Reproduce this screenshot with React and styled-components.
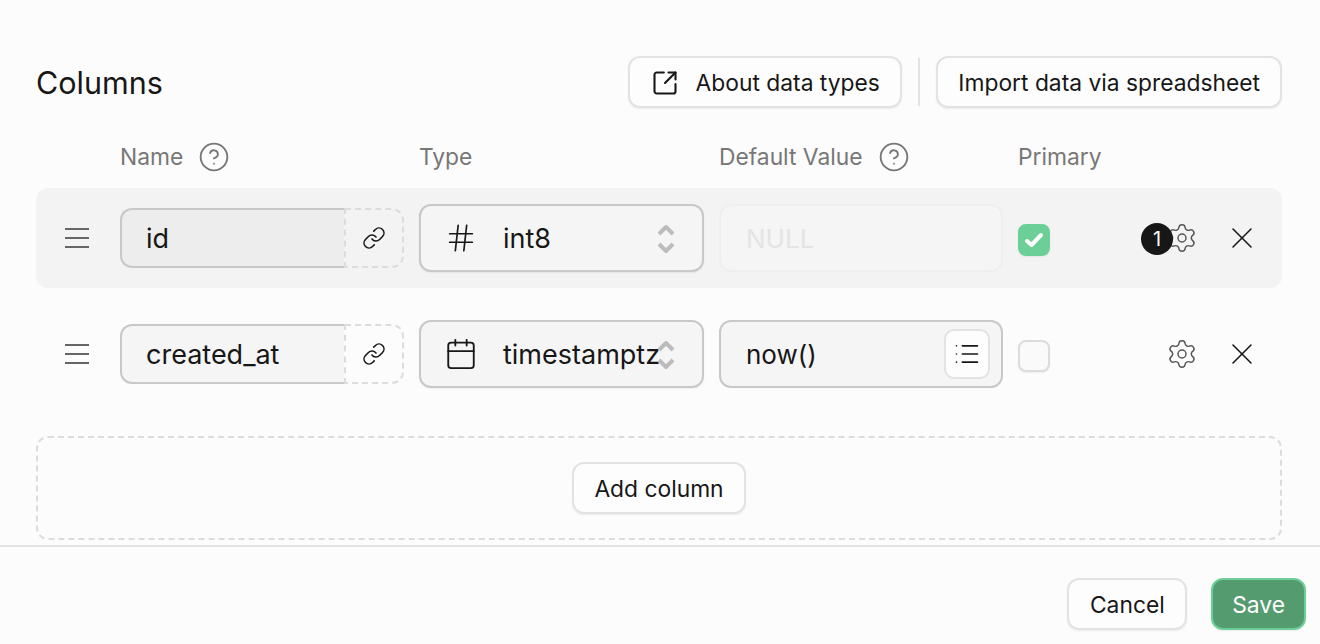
import styled, {createGlobalStyle} from 'styled-components'
import {Calendar, CircleHelp, Hash, Link as LinkIcon, List, Settings, SquareArrowOutUpRight, X} from 'lucide-react'

const GlobalStyle = createGlobalStyle`
	html, body {
		margin: 0;
		padding: 0;
		background: #fcfcfc;
	}
	* {
		box-sizing: border-box;
	}
`

const Page = styled.div`
	width: 1320px;
	height: 644px;
	overflow: hidden;
	background: #fcfcfc;
	color: #171717;
	font-family: Inter, "Noto Sans", sans-serif;
	font-size: 22.8px;
`
const Content = styled.div`
	height: 543px;
	padding: 56px 38px 0 36px;
	display: flex;
	flex-direction: column;
`
const TopBar = styled.div`
	height: 52px;
	display: flex;
	align-items: center;
	justify-content: space-between;
`
const Title = styled.h2`
	margin: 0;
	padding-top: 2px;
	font-size: 30.5px;
	font-weight: 400;
	line-height: 50px;
`
const TopActions = styled.div`
	display: flex;
	align-items: center;
`
const Button = styled.button`
	height: 52px;
	padding: 1px ${(props)=>props.$pad || 20}px 0;
	display: flex;
	align-items: center;
	gap: 17px;
	border: 2px solid ${(props)=>props.$primary ? "#6ccf97" : "#e3e3e3"};
	border-radius: 12px;
	background: ${(props)=>props.$primary ? "#559b70" : "#fdfdfd"};
	color: ${(props)=>props.$primary ? "#fdfdfd" : "#171717"};
	box-shadow: 0 1px 2px rgba(0,0,0,0.07);
	font-family: inherit;
	font-size: 22.8px;
	white-space: nowrap;
`
const Divider = styled.div`
	width: 2px;
	height: 48px;
	margin: 0 16px;
	background: #e3e3e3;
`
const Grid = styled.div`
	display: grid;
	grid-template-columns: 69px 284px 285px 284px 1fr;
	column-gap: 15px;
	align-items: center;
`
const HeadRow = styled(Grid)`
	height: 80px;
	padding-top: 17px;
	color: #777;
`
const HeadCell = styled.div`
	grid-column: ${(props)=>props.$col};
	display: flex;
	align-items: center;
	gap: 15px;
	height: 32px;
`
const Row = styled(Grid)`
	height: 100px;
	margin-bottom: 16px;
	border-radius: 12px;
	background: ${(props)=>props.$active ? "#f3f3f3" : "transparent"};
`
const Handle = styled.svg`
	width: 24px;
	height: 20px;
	margin-left: 29px;
	color: #666;
`
const NameField = styled.div`
	display: flex;
	height: 60px;
	font-size: 27px;
`
const NameInput = styled.div`
	width: 224px;
	padding-left: 24px;
	display: flex;
	align-items: center;
	border: 2px solid #c8c8c8;
	border-right: none;
	border-radius: 12px 0 0 12px;
	background: ${(props)=>props.$active ? "#ededed" : "#f5f5f5"};
`
const LinkBox = styled.div`
	width: 60px;
	display: flex;
	align-items: center;
	justify-content: center;
	border: 2px dashed #dcdcdc;
	border-radius: 0 12px 12px 0;
`
const Select = styled.div`
	position: relative;
	height: 68px;
	padding-left: 22px;
	display: flex;
	align-items: center;
	gap: 24px;
	border: 2px solid #c8c8c8;
	border-radius: 12px;
	background: #f5f5f5;
	box-shadow: 0 1px 2px rgba(0,0,0,0.06);
	font-size: 27px;
`
const TypeIcon = styled.div`
	width: 36px;
	display: flex;
	justify-content: center;
`
const Chevrons = styled.svg`
	position: absolute;
	right: 27px;
	top: 17px;
	width: 18px;
	height: 32px;
	color: #bcbcbc;
`
const DefaultInput = styled.div`
	position: relative;
	height: 68px;
	padding-left: 25px;
	display: flex;
	align-items: center;
	border: 2px solid ${(props)=>props.$disabled ? "#efefef" : "#c8c8c8"};
	border-radius: 12px;
	background: #f5f5f5;
	color: ${(props)=>props.$disabled ? "#e4e4e4" : "#171717"};
	font-size: 26px;
`
const ListButton = styled.div`
	position: absolute;
	right: 11px;
	top: 7px;
	width: 46px;
	height: 50px;
	display: flex;
	align-items: center;
	justify-content: center;
	border: 2px solid #e3e3e3;
	border-radius: 10px;
	background: #fdfdfd;
`
const RowEnd = styled.div`
	display: flex;
	align-items: center;
`
const Check = styled.div`
	width: 32px;
	height: 32px;
	margin-top: 4px;
	display: flex;
	align-items: center;
	justify-content: center;
	border: 2px solid ${(props)=>props.$on ? "#6ccf97" : "#dcdcdc"};
	border-radius: 8px;
	background: ${(props)=>props.$on ? "#6ccf97" : "#fafafa"};
	box-shadow: 0 1px 2px rgba(0,0,0,0.06);
`
const GearWrap = styled.div`
	position: relative;
	width: 32px;
	height: 32px;
	margin-left: 116px;
	display: flex;
	color: #555;
`
const Badge = styled.div`
	position: absolute;
	left: -25px;
	top: 1px;
	width: 32px;
	height: 32px;
	display: flex;
	align-items: center;
	justify-content: center;
	border-radius: 50%;
	background: #171717;
	color: #fff;
	font-size: 20px;
`
const CloseWrap = styled.div`
	margin-left: 26px;
	display: flex;
	color: #171717;
`
const AddArea = styled.div`
	height: 104px;
	margin-top: 16px;
	display: flex;
	align-items: center;
	justify-content: center;
	border: 2px dashed #dcdcdc;
	border-radius: 12px;
`
const Footer = styled.div`
	height: 101px;
	margin-top: 2px;
	padding: 31px 14px 0 0;
	display: flex;
	justify-content: flex-end;
	gap: 24px;
	border-top: 2px solid #e3e3e3;
`

const columns = [
	{name: "id", type: "int8", active: true},
	{name: "created_at", type: "timestamptz"},
]

const App = () => {
	return (
		<Page>
			<GlobalStyle />
			<Content>
				<TopBar>
					<Title>Columns</Title>
					<TopActions>
						<Button $pad={20.5}>
							<SquareArrowOutUpRight size={28} strokeWidth={1.8} />
							About data types
						</Button>
						<Divider />
						<Button>Import data via spreadsheet</Button>
					</TopActions>
				</TopBar>
				<HeadRow>
					<HeadCell $col={2}>Name <CircleHelp size={32} strokeWidth={1.4} /></HeadCell>
					<HeadCell $col={3}>Type</HeadCell>
					<HeadCell $col={4}>Default Value <CircleHelp size={32} strokeWidth={1.4} /></HeadCell>
					<HeadCell $col={5}>Primary</HeadCell>
				</HeadRow>
				{columns.map((col)=>(
					<Row key={col.name} $active={col.active}>
						<Handle viewBox="0 0 24 20" fill="none" stroke="currentColor" strokeWidth="2">
							<path d="M0 1h24M0 10h24M0 19h24" />
						</Handle>
						<NameField>
							<NameInput $active={col.active}>{col.name}</NameInput>
							<LinkBox><LinkIcon size={24} strokeWidth={1.6} /></LinkBox>
						</NameField>
						<Select>
							<TypeIcon>
								{col.active ? <Hash size={34} strokeWidth={1.2} /> : <Calendar size={34} strokeWidth={1.3} />}
							</TypeIcon>
							{col.type}
							<Chevrons viewBox="0 0 18 32" fill="none" stroke="currentColor" strokeWidth="4" strokeLinejoin="round">
								<path d="M2 11l7-7 7 7M2 21l7 7 7-7" />
							</Chevrons>
						</Select>
						{col.active ? (
							<DefaultInput $disabled>NULL</DefaultInput>
						) : (
							<DefaultInput>
								now()
								<ListButton><List size={28} strokeWidth={1.4} /></ListButton>
							</DefaultInput>
						)}
						<RowEnd>
							<Check $on={col.active}>
								{col.active && (
									<svg width="20" height="16" viewBox="0 0 20 16" fill="none" stroke="#fff" strokeWidth="4" strokeLinecap="round" strokeLinejoin="round">
										<path d="M3 9l4.5 4L17 3" />
									</svg>
								)}
							</Check>
							<GearWrap>
								<Settings size={32} strokeWidth={1.1} />
								{col.active && <Badge>1</Badge>}
							</GearWrap>
							<CloseWrap><X size={36} strokeWidth={1.05} /></CloseWrap>
						</RowEnd>
					</Row>
				))}
				<AddArea>
					<Button>Add column</Button>
				</AddArea>
			</Content>
			<Footer>
				<Button $pad={20.5}>Cancel</Button>
				<Button $primary $pad={19}>Save</Button>
			</Footer>
		</Page>
	)
}
export default App
